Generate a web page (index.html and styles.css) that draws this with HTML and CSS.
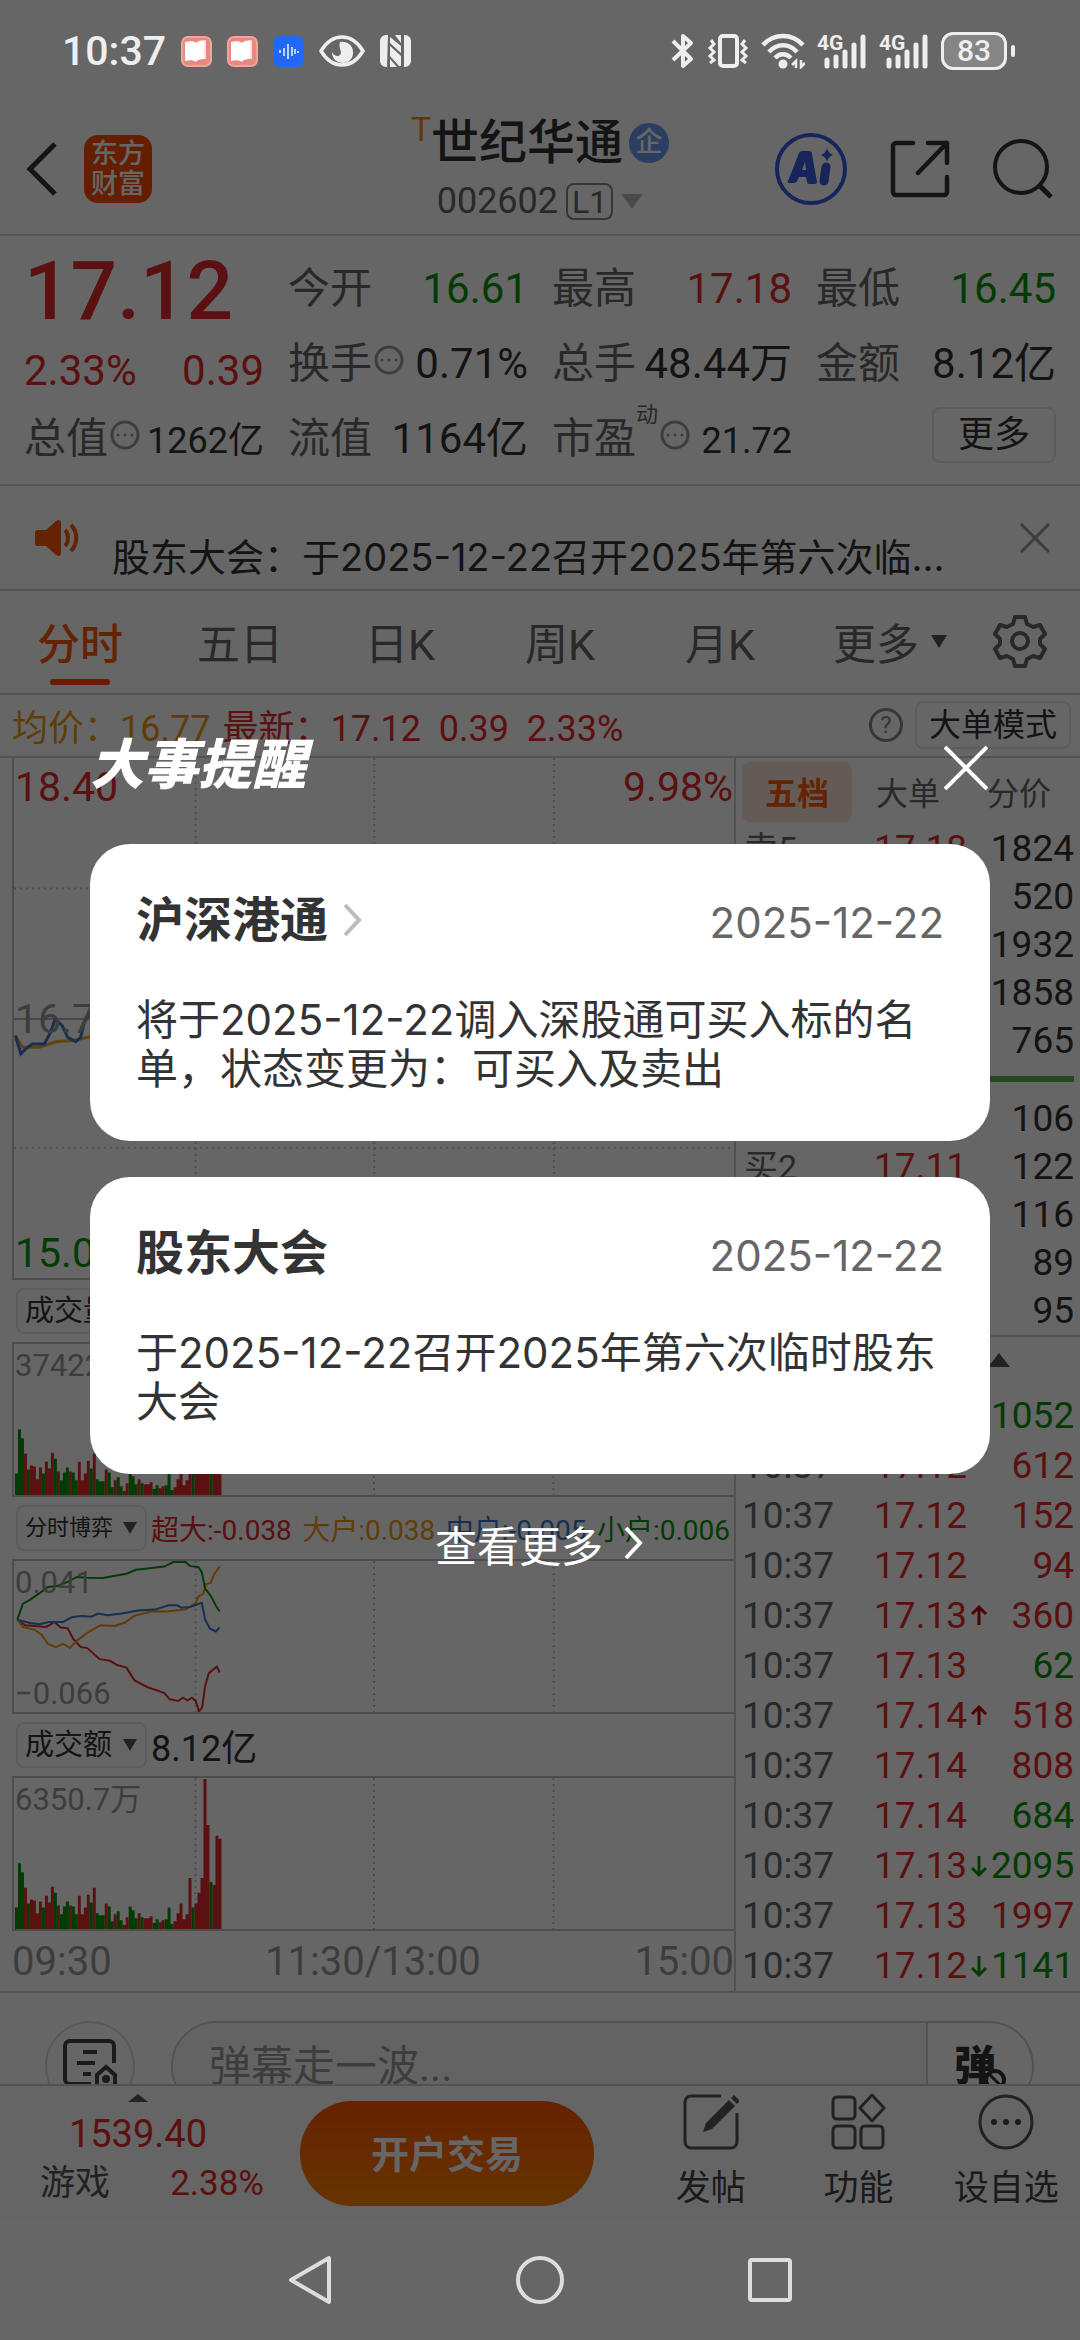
FILE: index.html
```html
<!DOCTYPE html>
<html lang="zh-CN">
<head>
<meta charset="utf-8">
<meta name="viewport" content="width=device-width, initial-scale=1">
<title>世纪华通 002602</title>
<link rel="stylesheet" href="styles.css">
</head>
<body>
<div class="app">
  <div class="statusbar">
    <div class="status-group">
      <span class="clock">10:37</span>
      <svg class="app-dot" viewBox="0 0 31 31"><rect x="1" y="1" width="29" height="29" rx="6" fill="#e58a80" stroke="#f0a59c" stroke-width="2"/><path d="M15 7c2-2 5-3 10-3v19c-4 0-8 0-10 2z" fill="#fbe3e0"/><path d="M4 6c5-1 9-1 11 1 2-2 5-2 8-2v18c-3 0-6 0-8 3-2-2-6-2-11-1z" fill="#fff"/></svg>
      <svg class="app-dot" viewBox="0 0 31 31"><rect x="1" y="1" width="29" height="29" rx="6" fill="#e58a80" stroke="#f0a59c" stroke-width="2"/><path d="M15 7c2-2 5-3 10-3v19c-4 0-8 0-10 2z" fill="#fbe3e0"/><path d="M4 6c5-1 9-1 11 1 2-2 5-2 8-2v18c-3 0-6 0-8 3-2-2-6-2-11-1z" fill="#fff"/></svg>
      <svg class="app-dot" viewBox="0 0 31 31"><rect width="31" height="31" rx="6" fill="#2268f5"/><path d="M7 14v3M11 12v8M15 8v15M19 11v9M22 13v5M25 15v2" stroke="#fff" stroke-width="1.4"/></svg>
      <svg width="46" height="32" viewBox="0 0 46 32"><path d="M2 16C8 6 15 2 23 2s15 4 21 14C38 26 31 30 23 30S8 26 2 16z" fill="none" stroke="#eee" stroke-width="3.5"/><path d="M21 7c8-1 13 4 13 10a10 10 0 0 1-10 11c-6 0-11-4-11-11 2 4 6 5 8 3 3-3-2-7 0-13z" fill="#eee"/></svg>
      <svg width="31" height="32" viewBox="0 0 31 32"><path d="M6 0h2l-1 32H6a6 6 0 0 1-6-6V6a6 6 0 0 1 6-6zM25 0a6 6 0 0 1 6 6v20a6 6 0 0 1-6 6h-1V0zM10 2l11 9v7L10 8zM10 11l11 10v10h-2l-9-10zM10 24l7 8h-7zM15 0h6v8z" fill="#eee"/></svg>
    </div>
    <div class="status-group status-right">
      <svg width="24" height="36" viewBox="0 0 24 36"><path d="M2 8l18 18-8 7V3l8 7L2 27" fill="none" stroke="#eee" stroke-width="4" stroke-linejoin="round"/></svg>
      <svg width="42" height="36" viewBox="0 0 42 36"><rect x="13" y="3" width="17" height="30" rx="3" fill="none" stroke="#eee" stroke-width="4"/><path d="M4 7l3 4-4 4 4 4-4 4 4 4-4 3M38 7l-3 4 4 4-4 4 4 4-4 4 4 3" fill="none" stroke="#eee" stroke-width="3"/></svg>
      <svg width="44" height="36" viewBox="0 0 44 36"><path d="M2 12c11-12 29-12 40 0M8 19c8-9 20-9 28 0M14 25c5-5 11-5 16 0" fill="none" stroke="#eee" stroke-width="4.5"/><circle cx="22" cy="31" r="4.5" fill="#eee"/><path d="M35 35v-7l-4 4M40 27v7l4-4" stroke="#eee" stroke-width="2.5" fill="none"/></svg>
      <svg width="50" height="38" viewBox="0 0 50 38"><text x="0" y="18" class="net">4G</text><path d="M10 34v-6M19 34V25M28 34V20M37 34V13M46 34V5" stroke="#eee" stroke-width="5" stroke-linecap="round"/></svg>
      <svg width="50" height="38" viewBox="0 0 50 38"><text x="0" y="18" class="net">4G</text><path d="M10 34v-6M19 34V25M28 34V20M37 34V13M46 34V5" stroke="#eee" stroke-width="5" stroke-linecap="round"/></svg>
      <span class="battery">83</span>
    </div>
  </div>

  <header class="header">
    <div class="header-left">
      <button class="icon-btn" aria-label="返回"><svg width="32" height="56" viewBox="0 0 32 56"><path d="M29 3L4 28l25 25" fill="none" stroke="#333" stroke-width="5"/></svg></button>
      <a class="logo" href="#">东方<br>财富</a>
    </div>
    <div class="header-title">
      <h1><sup>T</sup>世纪华通<span class="badge">企</span></h1>
      <p>002602<span class="level">L1</span><i class="caret"></i></p>
    </div>
    <div class="header-right">
      <button class="icon-btn" aria-label="AI"><svg width="74" height="74" viewBox="0 0 74 74"><circle cx="37" cy="37" r="34" fill="none" stroke="#3c5ce0" stroke-width="4"/><path fill-rule="evenodd" d="M14 49l11-28q1-2 3-2h7q3 0 3 3l5 28q0 2-2 2h-6q-2 0-2-2l-1-5h-7l-2 4q-1 2-3 2h-5q-2 0-1-2zM28 38h4l-1-8z" fill="#3c5ce0"/><path d="M52 35l-2 14" stroke="#3c5ce0" stroke-width="9" stroke-linecap="round"/><path d="M53 16q1 5 6 7-5 2-6 7-1-5-6-7 5-2 6-7z" fill="#3c5ce0"/></svg></button>
      <button class="icon-btn" aria-label="分享"><svg width="60" height="60" viewBox="0 0 60 60"><path d="M23 4H6a3 3 0 0 0-3 3v46a3 3 0 0 0 3 3h48a3 3 0 0 0 3-3V38M38 4h19v20M57 4L28 34" fill="none" stroke="#333" stroke-width="4.5" stroke-linecap="round" stroke-linejoin="round"/></svg></button>
      <button class="icon-btn" aria-label="搜索"><svg width="62" height="62" viewBox="0 0 62 62"><circle cx="29" cy="29" r="26" fill="none" stroke="#333" stroke-width="4"/><path d="M48 48l11 11" stroke="#333" stroke-width="5"/></svg></button>
    </div>
  </header>

  <section class="quote">
    <div class="last">
      <strong>17.12</strong>
      <div><span>2.33%</span><span>0.39</span></div>
    </div>
    <dl class="c1 r1"><dt>今开</dt><dd class="down">16.61</dd></dl>
    <dl class="c2 r1"><dt>最高</dt><dd class="up">17.18</dd></dl>
    <dl class="c3 r1"><dt>最低</dt><dd class="down">16.45</dd></dl>
    <dl class="c1 r2"><dt>换手<i class="more-dot"><svg viewBox="0 0 30 30"><circle cx="15" cy="15" r="13"/><path d="M8 15h0M15 15h0M22 15h0"/></svg></i></dt><dd>0.71%</dd></dl>
    <dl class="c2 r2"><dt>总手</dt><dd>48.44万</dd></dl>
    <dl class="c3 r2"><dt>金额</dt><dd>8.12亿</dd></dl>
    <dl class="c0 r3 small"><dt>总值<i class="more-dot"><svg viewBox="0 0 30 30"><circle cx="15" cy="15" r="13"/><path d="M8 15h0M15 15h0M22 15h0"/></svg></i></dt><dd>1262亿</dd></dl>
    <dl class="c1 r3"><dt>流值</dt><dd>1164亿</dd></dl>
    <dl class="c2 r3 small"><dt>市盈<sup>动</sup><i class="more-dot"><svg viewBox="0 0 30 30"><circle cx="15" cy="15" r="13"/><path d="M8 15h0M15 15h0M22 15h0"/></svg></i></dt><dd>21.72</dd></dl>
    <button class="more-btn">更多</button>
  </section>

  <section class="notice">
    <svg width="46" height="38" viewBox="0 0 46 38"><path d="M4 11h8L22 2c3-2 5-1 5 2v30c0 3-2 4-5 2l-10-9H4c-2 0-3-1-3-3V14c0-2 1-3 3-3z" fill="#f95a0c"/><path d="M31 11c4 4 4 12 0 16M37 6c7 7 7 19 0 26" fill="none" stroke="#f95a0c" stroke-width="4"/></svg>
    <p>股东大会：于2025-12-22召开2025年第六次临...</p>
    <button class="icon-btn" aria-label="关闭公告"><svg width="30" height="30" viewBox="0 0 30 30"><path d="M1 1l28 28M29 1L1 29" stroke="#999" stroke-width="3"/></svg></button>
  </section>

  <nav class="tabs">
    <button class="active">分时</button>
    <button>五日</button>
    <button>日K</button>
    <button>周K</button>
    <button>月K</button>
    <button class="with-caret">更多<i class="caret"></i></button>
    <button aria-label="设置"><svg width="54" height="54" viewBox="0 0 54 54"><path d="M22 3h10l2 7 6 3 7-2 5 9-5 5v5l5 5-5 9-7-2-6 3-2 7H22l-2-7-6-3-7 2-5-9 5-5v-5l-5-5 5-9 7 2 6-3z" fill="none" stroke="#666" stroke-width="4" stroke-linejoin="round"/><circle cx="27" cy="27" r="8" fill="none" stroke="#666" stroke-width="4"/></svg></button>
  </nav>

  <div class="legend">
    <span class="avg">均价：16.77</span>
    <span class="up">最新：17.12&nbsp; 0.39&nbsp; 2.33%</span>
    <i class="help">?</i>
    <button class="mode-btn">大单模式</button>
  </div>

  <main class="market">
    <section class="charts">
      <div class="chart chart-price">
        <svg viewBox="18 54 1047 1566" preserveAspectRatio="none">
          <path class="grid" d="M18 447H1065M18 1228H1065M282 54V1620M542 54V1620M803 54V1620"/>
          <path class="axis" d="M18 840H1065"/>
          <polyline stroke="#f5a623" points="20,890 30,925 55,925 80,908 105,905 130,893 145,888"/>
          <polyline stroke="#3877cc" points="20,890 28,945 35,930 38,925 45,915 62,915 70,885 78,840 88,860 96,895 108,908 115,895 120,850 128,825 140,820"/>
        </svg>
        <span class="tl up">18.40</span><span class="tr up">9.98%</span>
        <span class="ml">16.73</span><span class="bl down">15.06</span>
      </div>
      <div class="indicator"><label class="picker"><select aria-label="指标一"><option>成交量</option></select></label></div>
      <div class="chart">
        <svg viewBox="0 0 722 154" preserveAspectRatio="none"><path class="grid" d="M182 0V154M361 0V154M541 0V154"/><path class="bars-up"/><path class="bars-down"/></svg>
        <span class="tl">37422</span>
      </div>
      <div class="indicator"><label class="picker"><select class="long" aria-label="指标二"><option>分时博弈</option></select></label>
        <div class="flows"><span class="up">超大:-0.038</span><span class="avg">大户:0.038</span><span class="mid">中户:-0.005</span><span class="down">小户:0.006</span></div>
      </div>
      <div class="chart">
        <svg viewBox="26 361 1530 463" preserveAspectRatio="none">
          <path class="grid" d="M412 361V824M791 361V824M1173 361V824"/>
          <polyline stroke="#e32c2c" points="33,541 50,558 95,563 112,548 125,565 140,567 152,600 168,625 182,628 208,662 230,667 245,680 265,688 282,727 310,748 345,765 357,785 375,790 385,780 395,788 404,780 412,790 419,822 426,810 432,745 440,705 457,685 463,703"/>
          <polyline stroke="#f09a10" points="33,541 45,563 70,572 85,588 98,615 115,625 130,615 145,627 160,605 185,578 210,558 240,560 262,550 280,530 320,515 350,516 390,510 412,490 418,470 428,462 434,432 444,428 452,400 463,378"/>
          <polyline stroke="#3877cc" points="33,541 60,551 80,555 100,548 130,548 150,533 170,530 190,532 205,522 225,527 255,522 290,513 325,510 355,497 372,497 382,504 400,502 425,489 432,540 442,568 455,577 463,565"/>
          <polyline stroke="#0b950b" points="33,541 45,492 60,480 78,462 98,441 118,438 140,425 160,410 180,412 215,413 235,408 265,400 285,388 315,383 345,378 365,364 390,363 400,376 418,380 425,395 432,445 445,470 455,498 463,516"/>
        </svg>
        <span class="tl">0.041</span><span class="bl">−0.066</span>
      </div>
      <div class="indicator"><label class="picker"><select aria-label="指标三"><option>成交额</option></select></label><span class="amount">8.12亿</span></div>
      <div class="chart">
        <svg viewBox="0 0 722 154" preserveAspectRatio="none"><path class="grid" d="M182 0V154M361 0V154M541 0V154"/><path class="bars-up"/><path class="bars-down"/></svg>
        <span class="tl">6350.7万</span>
      </div>
      <div class="times"><span>09:30</span><span>11:30/13:00</span><span>15:00</span></div>
    </section>

    <section class="book">
      <div class="book-tabs"><button class="active">五档</button><button>大单</button><button>分价</button></div>
      <table class="depth">
        <tbody>
          <tr><th>卖5</th><td>17.18</td><td>1824</td></tr>
          <tr><th>卖4</th><td>17.17</td><td>520</td></tr>
          <tr><th>卖3</th><td>17.16</td><td>1932</td></tr>
          <tr><th>卖2</th><td>17.15</td><td>1858</td></tr>
          <tr><th>卖1</th><td>17.13</td><td>765</td></tr>
        </tbody>
      </table>
      <div class="ratio"></div>
      <table class="depth">
        <tbody>
          <tr><th>买1</th><td>17.12</td><td>106</td></tr>
          <tr><th>买2</th><td>17.11</td><td>122</td></tr>
          <tr><th>买3</th><td>17.10</td><td>116</td></tr>
          <tr><th>买4</th><td>17.09</td><td>89</td></tr>
          <tr><th>买5</th><td>17.08</td><td>95</td></tr>
        </tbody>
      </table>
      <div class="fold"><i></i></div>
      <table class="trades">
        <tbody>
          <tr><th>10:37</th><td>17.12</td><td></td><td class="down">1052</td></tr>
          <tr><th>10:37</th><td>17.12</td><td></td><td class="up">612</td></tr>
          <tr><th>10:37</th><td>17.12</td><td></td><td class="up">152</td></tr>
          <tr><th>10:37</th><td>17.12</td><td></td><td class="up">94</td></tr>
          <tr><th>10:37</th><td>17.13</td><td class="rise"><svg viewBox="0 0 16 24"><path d="M8 21V4M1 10l7-7 7 7"/></svg></td><td class="up">360</td></tr>
          <tr><th>10:37</th><td>17.13</td><td></td><td class="down">62</td></tr>
          <tr><th>10:37</th><td>17.14</td><td class="rise"><svg viewBox="0 0 16 24"><path d="M8 21V4M1 10l7-7 7 7"/></svg></td><td class="up">518</td></tr>
          <tr><th>10:37</th><td>17.14</td><td></td><td class="up">808</td></tr>
          <tr><th>10:37</th><td>17.14</td><td></td><td class="down">684</td></tr>
          <tr><th>10:37</th><td>17.13</td><td class="fall"><svg viewBox="0 0 16 24"><path d="M8 2v18M1 14l7 7 7-7"/></svg></td><td class="down">2095</td></tr>
          <tr><th>10:37</th><td>17.13</td><td></td><td class="up">1997</td></tr>
          <tr><th>10:37</th><td>17.12</td><td class="fall"><svg viewBox="0 0 16 24"><path d="M8 2v18M1 14l7 7 7-7"/></svg></td><td class="down">1141</td></tr>
        </tbody>
      </table>
    </section>
  </main>

  <section class="comment">
    <button class="round" aria-label="帖子"><svg width="54" height="54" viewBox="0 0 54 54"><path d="M28 45H7a5 5 0 0 1-5-5V7a5 5 0 0 1 5-5h39a5 5 0 0 1 5 5v17M20 13h14M14 24h18M20 35h8" fill="none" stroke="#444" stroke-width="4"/><path d="M34 48V36l9-8 9 8v12z" fill="none" stroke="#444" stroke-width="4"/><circle cx="43" cy="40" r="4" fill="#444"/></svg></button>
    <div class="danmu">
      <input type="text" placeholder="弹幕走一波..." aria-label="弹幕">
      <button aria-label="弹幕开关"><b>弹</b><svg width="22" height="22" viewBox="0 0 22 22"><circle cx="11" cy="11" r="9" fill="#fff" stroke="#333" stroke-width="4"/><path d="M5 5l12 12" stroke="#333" stroke-width="3"/></svg></button>
    </div>
  </section>

  <footer class="bottombar">
    <div class="sector">
      <i></i>
      <strong>1539.40</strong>
      <p><span>游戏</span><span class="up">2.38%</span></p>
    </div>
    <button class="trade">开户交易</button>
    <div class="actions">
      <button><svg width="56" height="58" viewBox="0 0 56 58"><path d="M38 3H8a6 6 0 0 0-6 6v40a6 6 0 0 0 6 6h40a6 6 0 0 0 6-6V20" fill="none" stroke="#555" stroke-width="3"/><path d="M20 39l3-9L46 7l6 6-23 23zM48 5l3-3 6 6-3 3z" fill="#555"/></svg>发帖</button>
      <button><svg width="56" height="58" viewBox="0 0 56 58"><g fill="none" stroke="#555" stroke-width="3"><rect x="3" y="4" width="22" height="22" rx="4"/><rect x="3" y="33" width="22" height="22" rx="4"/><rect x="31" y="33" width="22" height="22" rx="4"/><path d="M42 2l12 13-12 13-12-13z" stroke-linejoin="round"/></g></svg>功能</button>
      <button><svg width="56" height="58" viewBox="0 0 56 58"><circle cx="28" cy="29" r="26" fill="none" stroke="#555" stroke-width="3"/><g fill="#444"><circle cx="16" cy="29" r="3"/><circle cx="28" cy="29" r="3"/><circle cx="40" cy="29" r="3"/></g></svg>设自选</button>
    </div>
  </footer>

  <nav class="sysnav">
    <button aria-label="后退"><svg width="48" height="52" viewBox="0 0 48 52"><path d="M43 4v44L5 26z" fill="none" stroke="#ddd" stroke-width="4" stroke-linejoin="round"/></svg></button>
    <button aria-label="主页"><svg width="48" height="52" viewBox="0 0 48 52"><circle cx="24" cy="26" r="22" fill="none" stroke="#ddd" stroke-width="4"/></svg></button>
    <button aria-label="最近任务"><svg width="48" height="52" viewBox="0 0 48 52"><rect x="4" y="6" width="40" height="40" rx="2" fill="none" stroke="#ddd" stroke-width="4"/></svg></button>
  </nav>

  <div class="scrim"></div>
  <div class="dialog" role="dialog" aria-label="大事提醒">
    <div class="dialog-head">
      <h2>大事提醒</h2>
      <button class="icon-btn" aria-label="关闭"><svg width="44" height="44" viewBox="0 0 44 44"><path d="M1 1l42 42M43 1L1 43" stroke="#fff" stroke-width="4"/></svg></button>
    </div>
    <article class="card">
      <header><h3>沪深港通<svg width="22" height="34" viewBox="0 0 22 34"><path d="M3 2l14 15L3 32" fill="none" stroke="#bbb" stroke-width="4"/></svg></h3><time>2025-12-22</time></header>
      <p>将于2025-12-22调入深股通可买入标的名单，状态变更为：可买入及卖出</p>
    </article>
    <article class="card">
      <header><h3>股东大会</h3><time>2025-12-22</time></header>
      <p>于2025-12-22召开2025年第六次临时股东大会</p>
    </article>
    <a class="see-more" href="#">查看更多<svg width="22" height="34" viewBox="0 0 22 34"><path d="M3 2l14 15L3 32" fill="none" stroke="#fff" stroke-width="4"/></svg></a>
  </div>
</div>
<script src="app.js"></script>
</body>
</html>
```
FILE: styles.css
```css
* { box-sizing: border-box; margin: 0; padding: 0; }
body { background: #fff; color: #333; font-family: Roboto, "Noto Sans CJK SC", sans-serif; }
button, input, select { font: inherit; color: inherit; background: none; border: 0; }
a { color: inherit; text-decoration: none; }
i { font-style: normal; }
svg { display: block; flex: none; }
table { border-collapse: collapse; width: 100%; table-layout: fixed; }
th { font-weight: 400; }
.up { color: #e32c2c; }
.down { color: #0b950b; }
.avg { color: #f09a10; }
.mid { color: #3877cc; }
.icon-btn { display: flex; }

.app { position: relative; display: flex; flex-direction: column; min-height: 100vh; overflow: hidden; }

/* system status bar */
.statusbar { position: relative; z-index: 3; display: flex; justify-content: space-between; align-items: center; height: 104px; padding: 0 73px 2px 62px; color: #eee; }
.status-group { display: flex; align-items: center; gap: 15px; }
.status-right { gap: 12px; }
.clock { font-size: 41px; font-weight: 500; }
.app-dot { width: 31px; height: 31px; }
.net { font-size: 21px; font-weight: 700; fill: #eee; }
.battery { position: relative; width: 66px; height: 38px; border: 3px solid #eee; border-radius: 12px; background: #858585; font-size: 30px; line-height: 32px; font-weight: 500; text-align: center; }
.battery::after { content: ""; position: absolute; right: -11px; top: 10px; width: 4px; height: 12px; border-radius: 2px; background: #eee; }

/* stock header */
.header { display: grid; grid-template-columns: 1fr auto 1fr; align-items: center; height: 132px; padding: 0 26px; border-bottom: 2px solid #d5d5d5; }
.header-left { display: flex; align-items: center; gap: 26px; }
.logo { width: 68px; height: 68px; border-radius: 14px; background: #fc4c02; color: #fff; font-size: 27px; line-height: 30px; font-weight: 500; text-align: center; padding-top: 4px; }
.header-title { display: flex; flex-direction: column; align-items: center; }
.header-title h1 { display: flex; align-items: center; font-size: 48px; line-height: 64px; font-weight: 500; }
.header-title sup { align-self: flex-start; width: 20px; font-size: 34px; line-height: 36px; font-weight: 400; color: #f08a1c; }
.badge { width: 40px; height: 40px; margin-left: 6px; border-radius: 50%; background: #6d9af0; color: #fff; font-size: 27px; line-height: 38px; text-align: center; }
.header-title p { display: flex; align-items: center; gap: 8px; font-size: 36px; line-height: 52px; color: #666; }
.level { height: 37px; padding: 0 4px; border: 2px solid #888; border-radius: 8px; font-size: 32px; line-height: 34px; }
.header-title .caret { border: 11px solid transparent; border-top: 15px solid #bbb; border-bottom: 0; }
.header-right { display: flex; align-items: center; justify-content: flex-end; gap: 42px; }

/* quote figures */
.quote { display: grid; grid-template-columns: repeat(4, 1fr); grid-template-rows: repeat(3, 75px); column-gap: 24px; height: 250px; padding: 11px 24px; border-bottom: 2px solid #d5d5d5; align-items: center; }
.last { grid-area: 1 / 1 / 3 / 2; color: #e32c2c; }
.last strong { display: block; font-size: 82px; line-height: 92px; font-weight: 500; padding: 2px 0 4px; }
.last div { display: flex; justify-content: space-between; font-size: 42px; line-height: 60px; }
.quote dl { display: flex; justify-content: space-between; align-items: baseline; font-size: 42px; white-space: nowrap; }
.quote dt { display: flex; align-items: center; color: #666; }
.quote dt sup { align-self: flex-start; font-size: 22px; line-height: 22px; }
.quote .small dd { font-size: 36px; }
.more-dot { margin-left: 2px; }
.more-dot svg { width: 30px; height: 30px; fill: none; stroke: #999; stroke-width: 3; stroke-linecap: round; }
.c0 { grid-column: 1; } .c1 { grid-column: 2; } .c2 { grid-column: 3; } .c3 { grid-column: 4; }
.r1 { grid-row: 1; } .r2 { grid-row: 2; } .r3 { grid-row: 3; }
.more-btn { grid-area: 3 / 4; justify-self: end; width: 124px; height: 56px; border: 2px solid #e6e6e6; border-radius: 8px; font-size: 36px; line-height: 48px; }

/* announcement */
.notice { display: flex; align-items: center; height: 105px; padding: 0 30px 0 34px; border-bottom: 2px solid #d0d0d0; }
.notice p { flex: 1; align-self: flex-end; margin-left: 32px; font-family: Inter, "Noto Sans CJK SC", sans-serif; font-size: 38px; line-height: 64px; white-space: nowrap; overflow: hidden; }

/* period tabs */
.tabs { display: grid; grid-template-columns: repeat(6, 4fr) 3fr; height: 104px; border-bottom: 2px solid #d0d0d0; }
.tabs button { position: relative; display: flex; align-items: center; justify-content: center; gap: 12px; padding-bottom: 2px; font-size: 43px; color: #666; }
.tabs .active { color: #f95a0c; font-weight: 500; }
.tabs .active::after { content: ""; position: absolute; bottom: 8px; width: 60px; height: 6px; border-radius: 3px; background: #fc4c02; }
.tabs .with-caret { padding-left: 20px; }
.tabs .caret { border: 8px solid transparent; border-top: 13px solid #555; border-bottom: 0; }

.legend { display: flex; align-items: center; gap: 12px; height: 63px; padding: 0 9px 2px 12px; border-bottom: 2px solid #d0d0d0; font-size: 36px; white-space: nowrap; }
.help { width: 34px; height: 34px; margin-left: auto; border: 3px solid #888; border-radius: 50%; color: #888; font-size: 24px; line-height: 28px; text-align: center; }
.mode-btn { width: 156px; height: 48px; border: 2px solid #e6e6e6; border-radius: 8px; font-size: 32px; line-height: 40px; }

/* charts and order book */
.market { display: grid; grid-template-columns: minmax(0, 1fr) 344px; border-bottom: 2px solid #d0d0d0; }
.charts { padding-left: 12px; border-right: 2px solid #ccc; }
.chart { position: relative; height: 155px; border: 2px solid #c0c0c0; border-right: 0; color: #999; font-size: 31px; line-height: 36px; }
.chart svg { width: 100%; height: 100%; fill: none; }
.chart polyline { stroke-width: 2; vector-effect: non-scaling-stroke; }
.chart-price polyline { stroke-width: 3; }
.grid { stroke: #c4c4c4; stroke-width: 2; stroke-dasharray: 2 4; vector-effect: non-scaling-stroke; }
.axis { stroke: #b4b4b4; stroke-width: 2; vector-effect: non-scaling-stroke; }
.bars-up { stroke: #e32c2c; stroke-width: 3; }
.bars-down { stroke: #0b950b; stroke-width: 3; }
.chart span { position: absolute; }
.chart-price { height: 522px; border-top: 0; font-size: 41px; line-height: 50px; }
.chart .tl { top: 4px; left: 1px; }
.chart .tr { top: 4px; right: 1px; }
.chart .ml { top: 236px; left: 1px; }
.chart .bl { bottom: 0; left: 1px; }
.chart .up { color: #e32c2c; }
.chart .down { color: #0b950b; }
.indicator { display: flex; align-items: center; gap: 4px; height: 62px; padding-left: 4px; }
.picker { position: relative; width: 131px; height: 46px; border: 2px solid #e6e6e6; border-radius: 8px; background: #fcfcfc; }
.picker::after { content: ""; position: absolute; right: 8px; top: 15px; border: 7px solid transparent; border-top: 12px solid #555; border-bottom: 0; }
.picker select { width: 100%; height: 100%; padding-left: 7px; appearance: none; font-size: 29px; line-height: 42px; }
.picker .long { font-size: 22px; }
.flows { flex: 1; display: flex; justify-content: space-between; padding-right: 4px; font-size: 28px; white-space: nowrap; }
.amount { font-size: 36px; }
.times { display: grid; grid-template-columns: 1fr auto 1fr; height: 60px; font-size: 40px; line-height: 62px; color: #999; }
.times span:last-child { text-align: right; }

.book-tabs { display: flex; justify-content: space-between; align-items: center; height: 67px; padding: 0 6px; }
.book-tabs button { width: 110px; height: 60px; padding-bottom: 2px; border-radius: 8px; font-size: 32px; color: #666; }
.book-tabs .active { background: #fde3d8; color: #f95a0c; font-weight: 700; }
.depth tr { height: 48px; }
.depth th, .depth td { line-height: 48px; font-size: 37px; }
.depth th { width: 120px; padding-left: 8px; text-align: left; font-size: 34px; color: #666; }
.depth td { text-align: right; padding-right: 6px; }
.depth td:nth-child(2) { width: 111px; padding: 0; color: #e32c2c; }
.ratio { height: 6px; margin: 11px 6px 13px; background: #58b94a; }
.fold { display: flex; justify-content: flex-end; height: 56px; padding: 16px 70px 0 0; border-top: 2px solid #ccc; }
.fold i { height: 0; border: 11px solid transparent; border-bottom: 14px solid #555; border-top: 0; }
.trades tr { height: 50px; }
.trades th, .trades td { font-size: 37px; line-height: 50px; text-align: right; }
.trades th { width: 120px; padding-left: 6px; text-align: left; color: #666; }
.trades td:nth-child(2) { width: 111px; color: #e32c2c; }
.trades td:nth-child(3) { width: 24px; padding-left: 4px; }
.trades td:last-child { padding-right: 6px; }
.trades svg { width: 16px; height: 24px; fill: none; stroke: #c00000; stroke-width: 3; }
.trades .fall svg { stroke: #0b950b; }

/* comment strip, cut off by the bottom bar */
.comment { display: flex; gap: 36px; height: 91px; padding: 28px 46px 0 45px; overflow: hidden; }
.round { display: flex; align-items: center; justify-content: center; flex: none; width: 90px; height: 90px; border: 2px solid #ddd; border-radius: 50%; }
.danmu { flex: 1; display: flex; height: 90px; border: 2px solid #ccc; border-radius: 45px; overflow: hidden; }
.danmu input { flex: 1; padding-left: 36px; background: #f7f7f7; font-size: 42px; }
.danmu input::placeholder { color: #999; opacity: 1; }
.danmu button { position: relative; width: 106px; padding: 0 10px 8px 0; border-left: 2px solid #ccc; font-size: 42px; }
.danmu b { font-weight: 900; }
.danmu button svg { position: absolute; right: 26px; bottom: 18px; }

.bottombar { display: grid; grid-template-columns: 300px 294px 1fr; align-items: center; height: 136px; background: #fcfcfc; border-top: 2px solid #ccc; }
.sector { align-self: start; display: flex; flex-direction: column; align-items: center; width: 276px; padding-top: 8px; }
.sector i { border: 10px solid transparent; border-bottom: 8px solid #556; border-top: 0; }
.sector strong { font-size: 38px; line-height: 64px; font-weight: 400; color: #e32c2c; }
.sector p { display: flex; justify-content: space-between; width: 100%; padding: 0 12px 0 40px; font-size: 35px; line-height: 36px; color: #555; }
.sector .up { color: #e32c2c; }
.trade { height: 105px; padding-bottom: 4px; border-radius: 52px; background: linear-gradient(#fe5500, #ff8400); color: #fff; font-size: 38px; font-weight: 700; }
.actions { display: grid; grid-template-columns: repeat(3, 1fr); padding-left: 43px; }
.actions button { display: flex; flex-direction: column; align-items: center; gap: 14px; font-size: 35px; line-height: 48px; color: #444; }

.sysnav { position: relative; z-index: 3; display: flex; justify-content: center; gap: 182px; height: 120px; }
.sysnav button { display: flex; align-items: center; }

/* reminder dialog */
.scrim { position: absolute; inset: 0; z-index: 1; background: rgba(0, 0, 0, .6); }
.dialog { position: absolute; z-index: 2; top: 732px; left: 90px; right: 90px; color: #fff; }
.dialog-head { display: flex; justify-content: space-between; align-items: center; height: 76px; padding: 0 2px 4px 0; margin-bottom: 36px; }
.dialog-head h2 { padding-bottom: 4px; font-size: 54px; line-height: 64px; font-weight: 900; font-style: italic; }
.card { margin-bottom: 36px; padding: 46px 46px 48px; border-radius: 40px; background: #fff; color: #333; font-family: Inter, "Noto Sans CJK SC", sans-serif; }
.card header { display: flex; justify-content: space-between; align-items: center; height: 64px; margin-bottom: 41px; }
.card h3 { display: flex; align-items: center; gap: 14px; padding-bottom: 4px; font-size: 48px; line-height: 64px; font-weight: 700; }
.card time { font-size: 42px; color: #666; }
.card p { font-size: 42px; line-height: 49px; }
.see-more { display: flex; align-items: center; justify-content: center; gap: 20px; height: 66px; font-size: 42px; }
```
FILE: app.js
```js
// Per-minute turnover: [direction][height]
const bars = 'd22 d67 d58 u42 d26 u30 u29 u16 u28 d22 u34 u27 u43 d37 u24 d15 d23 d28 u24 d23 d15 u34 u15 u22 u35 d27 u42 d16 d14 d14 u26 d23 d8 u15 d18 d9 u4 u12 d23 d19 d11 u16 d12 u11 u11 u13 d6 d10 u7 u9 d10 d22 d5 u8 u16 u26 u10 u15 u52 d22 u26 u37 u52 u153 u106 d48 u45 u95 u92'.split(' ');
const line = dir => bars.map((b, i) => b[0] === dir ? `M${3 * i + 2.5} 154v-${b.slice(1)}` : '').join('');
document.querySelectorAll('.bars-up').forEach(p => p.setAttribute('d', line('u')));
document.querySelectorAll('.bars-down').forEach(p => p.setAttribute('d', line('d')));
```
